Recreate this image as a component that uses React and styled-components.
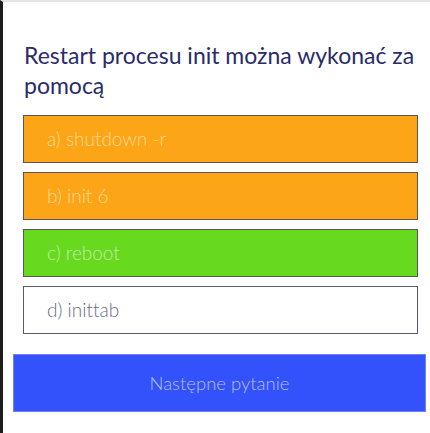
import React from "react";
import styled, { createGlobalStyle } from "styled-components";

const Global = createGlobalStyle`
  html, body { margin: 0; padding: 0; background: #ffffff; }
  body { font-family: Lato, "Open Sans", sans-serif; }
`;

const Page = styled.div`
  width: 430px;
  height: 433px;
  box-sizing: border-box;
  border-left: 3px solid #1c1c1c;
  border-top: 2px solid #e4e4e4;
  background: #fff;
  display: flex;
  flex-direction: column;
  overflow: hidden;
`;

const Content = styled.div`
  padding: 38px 10px 0 20px;
  display: flex;
  flex-direction: column;
`;

const Question = styled.h1`
  margin: 0 0 15px 1px;
  font-family: Lato, sans-serif;
  font-weight: 400;
  font-size: 23px;
  line-height: 30px;
  color: #2a2c69;
`;

const Options = styled.div`
  display: flex;
  flex-direction: column;
  gap: 9.5px;
  width: 395px;
`;

const Option = styled.div`
  box-sizing: border-box;
  height: 47.5px;
  display: flex;
  align-items: center;
  padding: 0 0 1px 23px;
  border: 1.5px solid ${p => (p.$variant === "plain" ? "#555a70" : "#5d5552")};
  background: ${p =>
    p.$variant === "wrong" ? "#fba517" : p.$variant === "right" ? "#67d91f" : "#ffffff"};
  color: ${p =>
    p.$variant === "wrong" ? "#fdd998" : p.$variant === "right" ? "#c2efa6" : "#6a6c80"};
  font-family: Lato, sans-serif;
  font-weight: 300;
  font-size: 19px;
  font-variant-ligatures: none;
`;

const Next = styled.button`
  margin: 20px 0 0 10px;
  width: 413px;
  height: 58px;
  border: 1px solid #6d84f5;
  background: #3352fb;
  color: #b3c0ff;
  font-family: Lato, sans-serif;
  font-weight: 300;
  font-size: 18.5px;
  cursor: pointer;
`;

const options = [
  { label: "a) shutdown -r", variant: "wrong" },
  { label: "b) init 6", variant: "wrong" },
  { label: "c) reboot", variant: "right" },
  { label: "d) inittab", variant: "plain" },
];

export default function App() {
  return (
    <>
      <Global />
      <Page>
        <Content>
          <Question>Restart procesu init można wykonać za pomocą</Question>
          <Options>
            {options.map(o => (
              <Option key={o.label} $variant={o.variant}>
                {o.label}
              </Option>
            ))}
          </Options>
        </Content>
        <Next>Następne pytanie</Next>
      </Page>
    </>
  );
}
